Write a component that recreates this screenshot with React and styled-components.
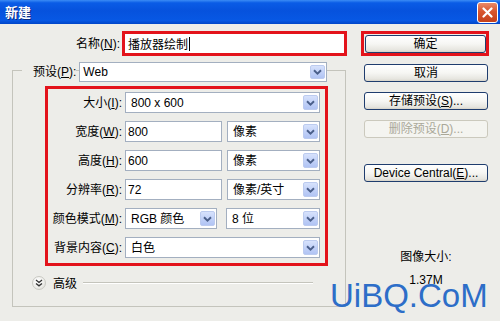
import React from 'react';
import styled, { createGlobalStyle } from 'styled-components';

const GlobalStyle = createGlobalStyle`
  body {
    margin: 0;
    font-family: "Liberation Sans", "Noto Sans CJK SC", sans-serif;
    font-size: 12px;
    color: #000;
  }
`;

const Dialog = styled.div`
  position: relative;
  width: 500px;
  height: 321px;
  overflow: hidden;
  background: #edede9;
`;

const TitleBar = styled.div`
  height: 24px;
  display: flex;
  align-items: center;
  justify-content: space-between;
  padding: 0 2px 0 5px;
  background: linear-gradient(to bottom, #3b8cf5 0%, #0a5ce6 12%, #0652dd 45%, #0758e4 85%, #0045c8 100%);
`;

const Title = styled.span`
  color: #fff;
  font-family: "Noto Sans CJK SC", sans-serif;
  font-weight: 700;
  font-size: 13px;
  line-height: 16px;
  text-shadow: 1px 1px 0 #0b2a80;
`;

const CloseButton = styled.div`
  width: 19px;
  height: 19px;
  border: 1px solid #fff;
  border-radius: 3px;
  background: linear-gradient(to bottom, #ea8a6a 0%, #d8552e 45%, #c4401a 100%);
  display: flex;
  align-items: center;
  justify-content: center;
`;

const Body = styled.div`
  display: flex;
  padding-top: 7px;
`;

const LeftCol = styled.div`
  width: 361px;
`;

const RightCol = styled.div`
  width: 128px;
  display: flex;
  flex-direction: column;
`;

const NameRow = styled.div`
  display: flex;
  align-items: center;
`;

const LabelText = styled.span`
  display: inline-block;
  width: ${(p) => p.$w || 74}px;
  text-align: right;
  white-space: nowrap;
  line-height: 16px;
  u { text-decoration-thickness: 1px; text-underline-offset: 1px; }
`;

const RedBox = styled.div`
  border: 3px solid #e3131b;
  box-sizing: border-box;
`;

const NameBox = styled(RedBox)`
  margin-left: 2px;
  width: 225px;
  height: 25px;
  background: #fff;
  display: flex;
  align-items: center;
  padding-left: 3px;
  font-family: "Noto Sans CJK SC", sans-serif;
  line-height: 16px;
`;

const Caret = styled.span`
  display: inline-block;
  width: 1px;
  height: 14px;
  margin-left: 1px;
  background: #000;
`;

const GroupBox = styled.div`
  margin: 14px 0 0 12px;
  width: 334px;
  box-sizing: border-box;
  border: 1px solid #c4c4bc;
  padding-bottom: 16px;
`;

const GroupHeader = styled.div`
  display: flex;
  align-items: center;
  margin: -9px 0 0 9px;
`;

const GroupLabel = styled.span`
  background: #edede9;
  padding-left: 11px;
  margin-right: 3px;
  line-height: 16px;
  white-space: nowrap;
  u { text-decoration-thickness: 1px; text-underline-offset: 1px; }
`;

const Settings = styled(RedBox)`
  margin: 4px 0 0 32px;
  width: 283px;
  padding: 3px 5px 5px 0;
  display: grid;
  grid-template-columns: 74px 195px;
  grid-auto-rows: 21px;
  column-gap: 3px;
  row-gap: 8px;
  align-items: center;
`;

const Pair = styled.div`
  display: flex;
  justify-content: space-between;
  height: 100%;
`;

const SelectBox = styled.div`
  width: ${(p) => (p.$w ? `${p.$w}px` : '100%')};
  height: ${(p) => p.$h || 21}px;
  box-sizing: border-box;
  border: 1px solid #a3afc0;
  background: #fff;
  display: flex;
  align-items: center;
  justify-content: space-between;
  padding: 0 1px 0 ${(p) => p.$pad ?? 5}px;
  line-height: 16px;
  white-space: nowrap;
`;

const ArrowBtn = styled.span`
  width: 15px;
  height: calc(100% - 4px);
  box-sizing: border-box;
  border: 1px solid #bccbef;
  border-radius: 2px;
  background: linear-gradient(to bottom, #d7e2fc 0%, #bfcff7 60%, #b1c4f4 100%);
  display: flex;
  align-items: center;
  justify-content: center;
`;

const InputBox = styled.div`
  width: ${(p) => p.$w}px;
  height: 100%;
  box-sizing: border-box;
  border: 1px solid #a3afc0;
  background: #fff;
  padding-left: 2px;
  display: flex;
  align-items: center;
  line-height: 16px;
`;

const AdvancedRow = styled.div`
  display: flex;
  align-items: center;
  margin: 10px 0 0 19px;
  height: 14px;
`;

const ExpandDot = styled.span`
  width: 14px;
  height: 14px;
  border-radius: 50%;
  box-sizing: border-box;
  border: 1px solid #c9c9c3;
  background: radial-gradient(circle at 40% 35%, #ffffff 0%, #ecece8 60%, #d4d4ce 100%);
  display: flex;
  align-items: center;
  justify-content: center;
`;

const AdvancedText = styled.span`
  margin-left: 7px;
  font-family: "Noto Sans CJK SC", sans-serif;
  line-height: 16px;
`;

const Rule = styled.span`
  margin-left: 6px;
  width: 230px;
  height: 1px;
  background: #c4c4bc;
  border-bottom: 1px solid #fff;
`;

const OkBox = styled(RedBox)`
  height: 25px;
  padding: 1px 2px 0 1px;
`;

const Button = styled.div`
  height: ${(p) => p.$h || 18}px;
  margin: ${(p) => p.$m || '0 0 0 3px'};
  width: ${(p) => p.$w || 124}px;
  box-sizing: border-box;
  border: 1px solid ${(p) => (p.$disabled ? '#cbc9bd' : '#1f3d6e')};
  border-radius: 3px;
  background: ${(p) =>
    p.$disabled
      ? '#f4f4f0'
      : 'linear-gradient(to bottom, #ffffff 0%, #f6f6f3 50%, #e6e5df 88%, #d6d3c8 100%)'};
  color: ${(p) => (p.$disabled ? '#aaa899' : '#000')};
  display: flex;
  align-items: center;
  justify-content: center;
  line-height: 14px;
  white-space: nowrap;
  u { text-decoration-thickness: 1px; text-underline-offset: 1px; }
`;

const InfoText = styled.div`
  margin-top: ${(p) => p.$mt}px;
  text-align: center;
  line-height: 14px;
  padding-left: 2px;
`;

const Watermark = styled.div`
  position: absolute;
  left: 330px;
  top: 279px;
  font-family: "Liberation Sans", sans-serif;
  font-size: 33px;
  line-height: 33px;
  color: #2d6ec8;
  letter-spacing: 0;
`;

const Chevron = ({ color = '#4a5f8a' }) => (
  <svg width="9" height="6" viewBox="0 0 9 6">
    <path d="M1 1.2 L4.5 4.6 L8 1.2" fill="none" stroke={color} strokeWidth="1.9" />
  </svg>
);

const Select = ({ children, ...rest }) => (
  <SelectBox {...rest}>
    <span>{children}</span>
    <ArrowBtn>
      <Chevron />
    </ArrowBtn>
  </SelectBox>
);

const settings = [
  { label: '大小', key: 'I', full: '800 x 600' },
  { label: '宽度', key: 'W', input: '800', unit: '像素' },
  { label: '高度', key: 'H', input: '600', unit: '像素' },
  { label: '分辨率', key: 'R', input: '72', unit: '像素/英寸' },
  { label: '颜色模式', key: 'M', pair: ['RGB 颜色', '8 位'] },
  { label: '背景内容', key: 'C', full: '白色' },
];

const App = () => {
  return (
    <Dialog>
      <GlobalStyle />
      <TitleBar>
        <Title>新建</Title>
        <CloseButton>
          <svg width="11" height="11" viewBox="0 0 11 11">
            <path d="M1.5 1.5 L9.5 9.5 M9.5 1.5 L1.5 9.5" stroke="#fff" strokeWidth="2.2" strokeLinecap="round" />
          </svg>
        </CloseButton>
      </TitleBar>

      <Body>
        <LeftCol>
          <NameRow>
            <LabelText $w={120}>
              名称(<u>N</u>):
            </LabelText>
            <NameBox>
              播放器绘制
              <Caret />
            </NameBox>
          </NameRow>

          <GroupBox>
            <GroupHeader>
              <GroupLabel>
                预设(<u>P</u>):
              </GroupLabel>
              <Select $w={248} $h={20} $pad={3}>
                Web
              </Select>
            </GroupHeader>

            <Settings>
              {settings.map((row) => (
                <React.Fragment key={row.key}>
                  <LabelText>
                    {row.label}(<u>{row.key}</u>):
                  </LabelText>
                  {row.full && <Select>{row.full}</Select>}
                  {row.input && (
                    <Pair>
                      <InputBox $w={97}>{row.input}</InputBox>
                      <Select $w={93}>{row.unit}</Select>
                    </Pair>
                  )}
                  {row.pair && (
                    <Pair>
                      <Select $w={92}>{row.pair[0]}</Select>
                      <Select $w={94}>{row.pair[1]}</Select>
                    </Pair>
                  )}
                </React.Fragment>
              ))}
            </Settings>

            <AdvancedRow>
              <ExpandDot>
                <svg width="8" height="8" viewBox="0 0 8 8">
                  <path d="M1 1 L4 3.4 L7 1 M1 4.4 L4 6.8 L7 4.4" fill="none" stroke="#333" strokeWidth="1.3" />
                </svg>
              </ExpandDot>
              <AdvancedText>高级</AdvancedText>
              <Rule />
            </AdvancedRow>
          </GroupBox>
        </LeftCol>

        <RightCol>
          <OkBox>
            <Button $h={18} $w={121} $m="0">确定</Button>
          </OkBox>
          <Button $m="8px 0 0 3px">取消</Button>
          <Button $m="10px 0 0 3px">
            存储预设(<u>S</u>)...
          </Button>
          <Button $m="10px 0 0 3px" $disabled>
            删除预设(<u>D</u>)...
          </Button>
          <Button $m="26px 0 0 3px">
            Device Central(<u>E</u>)...
          </Button>
          <InfoText $mt={68}>图像大小:</InfoText>
          <InfoText $mt={9}>1.37M</InfoText>
        </RightCol>
      </Body>

      <Watermark>UiBQ.CoM</Watermark>
    </Dialog>
  );
};

export default App;
